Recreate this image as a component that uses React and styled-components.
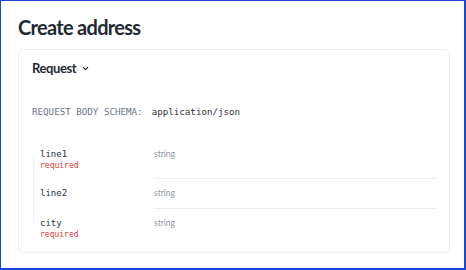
import React from 'react'
import styled, { createGlobalStyle } from 'styled-components'

const GlobalStyle = createGlobalStyle`
    html, body {
        margin: 0;
        padding: 0;
        background: #ffffff;
    }
`;

const Frame = styled.div`
    box-sizing: border-box;
    width: 466px;
    height: 270px;
    border-style: solid;
    border-color: #1546d8;
    border-width: 1px 2px 2px 1px;
    padding: 13px 14px 0 17px;
    font-family: Lato, "Open Sans", sans-serif;
    color: #263238;
    overflow: hidden;
`;

const Title = styled.h1`
    margin: 0 0 9px 0;
    font-size: 20px;
    line-height: 26px;
    font-weight: 700;
    letter-spacing: -0.7px;
    color: #1f2a33;
`;

const Card = styled.div`
    box-sizing: border-box;
    height: 204px;
    border: 1px solid #eeeeee;
    border-radius: 5px;
    padding: 9px 13px 0 13px;
`;

const Toggle = styled.div`
    display: flex;
    align-items: center;
    gap: 5px;
    height: 18px;
    font-size: 13px;
    font-weight: 700;
    letter-spacing: -0.4px;
    color: #1f2a33;
`;

const SchemaLine = styled.div`
    margin-top: 28px;
    display: flex;
    gap: 9px;
    font-family: "DejaVu Sans Mono", monospace;
    font-size: 9.2px;
    line-height: 14px;
`;

const SchemaLabel = styled.span`
    color: #6b7682;
`;

const SchemaValue = styled.span`
    color: #2b333a;
`;

const Props = styled.div`
    position: relative;
    margin-top: 29px;
    display: flex;
    flex-direction: column;
    &::before {
        content: '';
        position: absolute;
        left: 1px;
        top: 8px;
        height: 67px;
        border-left: 1px dotted #dcdfe3;
    }
`;

const Row = styled.div`
    display: grid;
    grid-template-columns: 122px 1fr;
    height: ${p => p.h}px;
`;

const NameCell = styled.div`
    box-sizing: border-box;
    padding: ${p => p.pt}px 0 0 8px;
`;

const Name = styled.div`
    font-family: "DejaVu Sans Mono", monospace;
    font-size: 9px;
    line-height: 12px;
    color: #2b333a;
`;

const Required = styled.div`
    font-family: "DejaVu Sans Mono", monospace;
    font-size: 8px;
    line-height: 12px;
    color: #e53935;
`;

const TypeCell = styled.div`
    box-sizing: border-box;
    padding-top: ${p => p.pt}px;
    border-bottom: ${p => (p.last ? 'none' : '1px solid #eeeeee')};
    font-size: 8.5px;
    line-height: 12px;
    color: #8d96a0;
`;

const Chevron = () => (
    <svg width="9" height="9" viewBox="0 0 10 10">
        <path d="M2.5 3.8 L5 6.3 L7.5 3.8" fill="none" stroke="#1f2a33" strokeWidth="1.3" strokeLinecap="round" strokeLinejoin="round" />
    </svg>
)

const fields = [
    { name: 'line1', required: true, h: 31, pt: 0 },
    { name: 'line2', required: false, h: 30, pt: 8 },
    { name: 'city', required: true, h: 32, pt: 8 },
]

const App = () => {
    return (
        <>
            <GlobalStyle />
            <Frame>
                <Title>Create address</Title>
                <Card>
                    <Toggle>
                        Request
                        <Chevron />
                    </Toggle>
                    <SchemaLine>
                        <SchemaLabel>REQUEST BODY SCHEMA:</SchemaLabel>
                        <SchemaValue>application/json</SchemaValue>
                    </SchemaLine>
                    <Props>
                        {fields.map((f, i) => (
                            <Row key={f.name} h={f.h}>
                                <NameCell pt={f.pt}>
                                    <Name>{f.name}</Name>
                                    {f.required && <Required>required</Required>}
                                </NameCell>
                                <TypeCell pt={f.pt} last={i === fields.length - 1}>string</TypeCell>
                            </Row>
                        ))}
                    </Props>
                </Card>
            </Frame>
        </>
    )
}

export default App
